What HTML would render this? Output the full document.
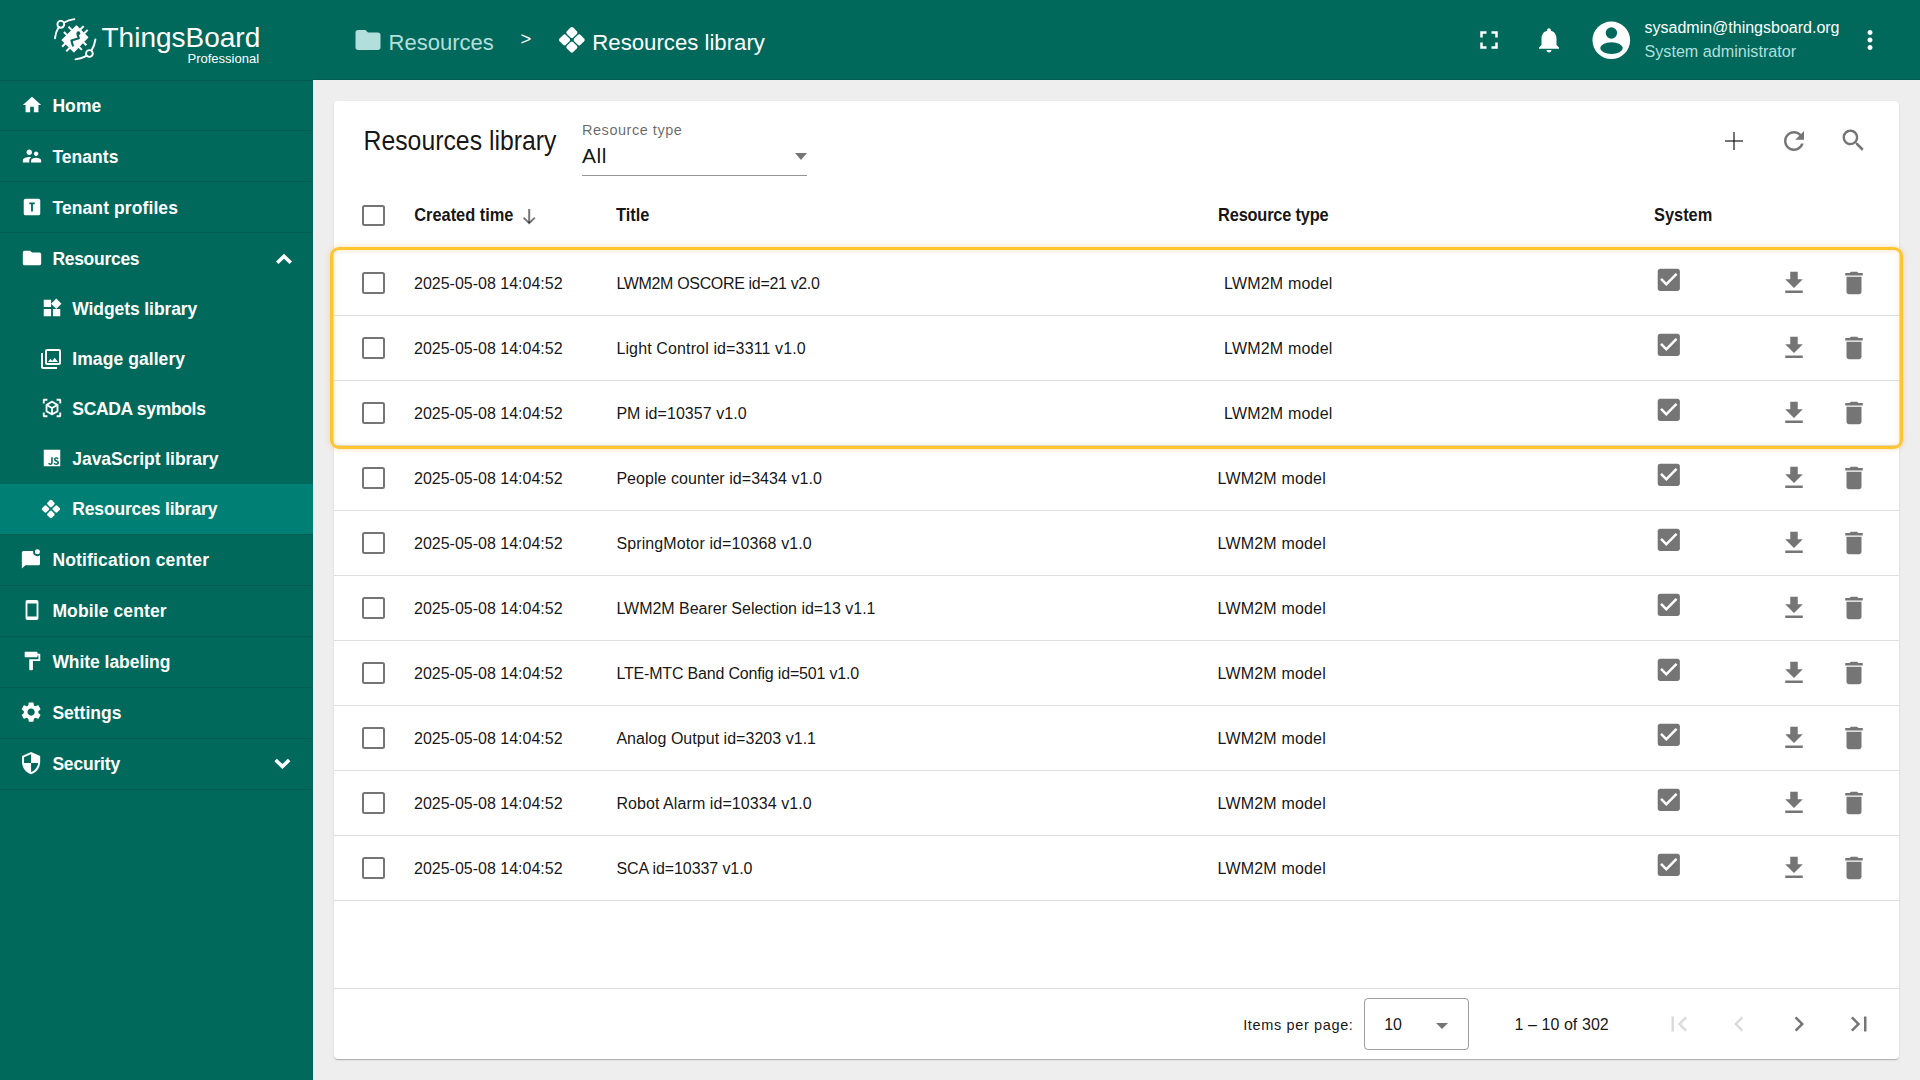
<!DOCTYPE html>
<html><head><meta charset="utf-8">
<style>
*{box-sizing:border-box;margin:0;padding:0}
html,body{width:1920px;height:1080px;overflow:hidden;background:#eeeeee;font-family:"Liberation Sans",sans-serif;color:rgba(0,0,0,0.93)}
.abs{position:absolute}
.t{position:absolute;line-height:1;white-space:nowrap}
svg{display:block}
</style></head><body>
<div class="abs" style="left:0;top:0;width:1920px;height:80px;background:#00695c"></div>
<div class="abs" style="left:313px;top:79px;width:1607px;height:1px;background:rgba(0,0,0,0.12)"></div>
<svg class="abs" style="left:48px;top:12px" width="52" height="52" viewBox="0 0 52 52">
<g fill="none" stroke="#fff" stroke-width="1.9" stroke-linecap="round">
<circle cx="12.8" cy="12.3" r="3.4"/>
<path d="M16.1,10.5 Q20.5,8 26.4,7.1"/>
<path d="M10.6,15.3 Q7.8,19.8 7.0,26.2"/>
<circle cx="41.4" cy="41.5" r="3.4"/>
<path d="M43.5,38.6 Q46.5,33.5 47.4,27.5"/>
<path d="M38.5,43.8 Q33.5,46.5 27.5,47.4"/>
</g>
<polygon points="28.4,13.9 39.8,25.3 25.9,39.8 14.1,28.1" fill="#fff" stroke="#fff" stroke-width="1.2" stroke-linejoin="round"/>
<g stroke="#fff" stroke-width="2">
<path d="M19.3,23.4 L15.9,20.0 M23.9,18.1 L20.5,14.7 M32.3,17.5 L35.7,14.1 M36.3,21.3 L39.7,17.9 M35.0,29.9 L38.4,33.3 M30.5,34.5 L33.9,37.9 M17.5,31.3 L14.1,34.7 M21.7,35.9 L18.3,39.3"/>
</g>
<g stroke="#00695c" stroke-width="2.1" fill="none" stroke-linejoin="round" stroke-linecap="round">
<path d="M29.6,22.6 L30.9,26.3 L23.4,28.4 L24.9,33.6"/>
</g>
<circle cx="30.4" cy="21.2" r="1.9" fill="#00695c"/>
</svg>
<div class="t" style="left:101.50px;top:24.10px;font-size:28px;color:#fff;font-weight:300">ThingsBoard</div>
<div class="t" style="left:187.50px;top:51.50px;font-size:13px;color:#fff;">Professional</div>
<svg class="abs" style="left:352.5px;top:25px;" width="30" height="30" viewBox="0 0 24 24"><path fill="#b2dfdb" d="M10 4H4c-1.1 0-1.99.9-1.99 2L2 18c0 1.1.9 2 2 2h16c1.1 0 2-.9 2-2V8c0-1.1-.9-2-2-2h-8l-2-2z"/></svg>
<div class="t" style="left:388.60px;top:31.68px;font-size:22px;color:#b2dfdb;">Resources</div>
<div class="t" style="left:520.50px;top:29.54px;font-size:18.5px;color:#fff;">&gt;</div>
<svg class="abs" style="left:0;top:0" width="800" height="600"><g fill="#fff"><rect x="567.35" y="28.05" width="9.0" height="9.0" rx="2" transform="rotate(45 571.85 32.55)"/><rect x="574.65" y="35.35" width="9.0" height="9.0" rx="2" transform="rotate(45 579.15 39.85)"/><rect x="567.35" y="42.65" width="9.0" height="9.0" rx="2" transform="rotate(45 571.85 47.15)"/><rect x="560.05" y="35.35" width="9.0" height="9.0" rx="2" transform="rotate(45 564.55 39.85)"/></g></svg>
<div class="t" style="left:592.30px;top:31.51px;font-size:22.2px;color:#fff;">Resources library</div>
<svg class="abs" style="left:1474px;top:25px;" width="30" height="30" viewBox="0 0 24 24"><path fill="#fff" d="M7 14H5v5h5v-2H7v-3zm-2-4h2V7h3V5H5v5zm12 7h-3v2h5v-5h-2v3zM14 5v2h3v3h2V5h-5z"/></svg>
<svg class="abs" style="left:1534px;top:25px;" width="30" height="30" viewBox="0 0 24 24"><path fill="#fff" d="M12 22c1.1 0 2-.9 2-2h-4c0 1.1.89 2 2 2zm6-6v-5c0-3.07-1.64-5.64-4.5-6.32V4c0-.83-.67-1.5-1.5-1.5s-1.5.67-1.5 1.5v.68C7.63 5.36 6 7.92 6 11v5l-2 2v1h16v-1l-2-2z"/></svg>
<svg class="abs" style="left:1586px;top:16px" width="50" height="50" viewBox="0 0 50 50">
<circle cx="25.3" cy="24.3" r="18.8" fill="#fff"/>
<circle cx="25.4" cy="17" r="5.7" fill="#00695c"/>
<ellipse cx="25.5" cy="32.1" rx="11.3" ry="5.9" fill="#00695c"/>
</svg>
<div class="t" style="left:1644.50px;top:20.36px;font-size:16px;color:#fff;">sysadmin@thingsboard.org</div>
<div class="t" style="left:1644.50px;top:43.33px;font-size:16.15px;color:#b2dfdb;">System administrator</div>
<svg class="abs" style="left:1855px;top:25px;" width="30" height="30" viewBox="0 0 24 24"><path fill="#fff" d="M12 8c1.1 0 2-.9 2-2s-.9-2-2-2-2 .9-2 2 .9 2 2 2zm0 2c-1.1 0-2 .9-2 2s.9 2 2 2 2-.9 2-2-.9-2-2-2zm0 6c-1.1 0-2 .9-2 2s.9 2 2 2 2-.9 2-2-.9-2-2-2z"/></svg>
<div class="abs" style="left:0;top:80px;width:313px;height:1000px;background:#00695c"></div>
<div class="abs" style="left:0;top:80px;width:313px;height:1px;background:rgba(0,0,0,0.14)"></div>
<svg class="abs" style="left:20.5px;top:94px;" width="22" height="22" viewBox="0 0 24 24"><path fill="#fff" d="M10 20v-6h4v6h5v-8h3L12 3 2 12h3v8z"/></svg>
<div class="t" style="left:52.40px;top:97.59px;font-size:17.5px;font-weight:bold;color:#fff;letter-spacing:0.08px;">Home</div>
<svg class="abs" style="left:20.5px;top:145px;" width="22" height="22" viewBox="0 0 24 24"><path fill="#fff" d="M16.5 12c1.38 0 2.49-1.12 2.49-2.5S17.88 7 16.5 7C15.12 7 14 8.12 14 9.5s1.12 2.5 2.5 2.5zM9 11c1.66 0 2.99-1.34 2.99-3S10.66 5 9 5C7.34 5 6 6.34 6 8s1.34 3 3 3zm7.5 3c-1.83 0-5.5.92-5.5 2.75V19h11v-2.25c0-1.83-3.67-2.75-5.5-2.75zM9 13c-2.33 0-7 1.17-7 3.5V19h7v-2.25c0-.85.33-2.34 2.37-3.47C10.5 13.1 9.66 13 9 13z"/></svg>
<div class="t" style="left:52.40px;top:148.59px;font-size:17.5px;font-weight:bold;color:#fff;letter-spacing:0.04px;">Tenants</div>
<svg class="abs" style="left:20.5px;top:196px;" width="22" height="22" viewBox="0 0 24 24"><path fill="#fff" d="M9,7V9H11V17H13V9H15V7H9M5,3H19A2,2 0 0,1 21,5V19A2,2 0 0,1 19,21H5A2,2 0 0,1 3,19V5A2,2 0 0,1 5,3Z"/></svg>
<div class="t" style="left:52.40px;top:199.59px;font-size:17.5px;font-weight:bold;color:#fff;letter-spacing:0.1px;">Tenant profiles</div>
<svg class="abs" style="left:20.5px;top:247px;" width="22" height="22" viewBox="0 0 24 24"><path fill="#fff" d="M10 4H4c-1.1 0-1.99.9-1.99 2L2 18c0 1.1.9 2 2 2h16c1.1 0 2-.9 2-2V8c0-1.1-.9-2-2-2h-8l-2-2z"/></svg>
<div class="t" style="left:52.40px;top:250.59px;font-size:17.5px;font-weight:bold;color:#fff;letter-spacing:-0.29px;">Resources</div>
<div class="abs" style="left:0;top:130px;width:313px;height:1px;background:rgba(0,0,0,0.13)"></div>
<div class="abs" style="left:0;top:181px;width:313px;height:1px;background:rgba(0,0,0,0.13)"></div>
<div class="abs" style="left:0;top:232px;width:313px;height:1px;background:rgba(0,0,0,0.13)"></div>
<svg class="abs" style="left:0;top:0" width="313" height="1080"><polygon points="284,253.75 292,261.5 289.5,264.0 284,258.75 278.5,264.0 276,261.5" fill="#fff"/></svg>
<div class="abs" style="left:0;top:484px;width:313px;height:50px;background:#007f74"></div>
<svg class="abs" style="left:40.5px;top:297px;" width="22" height="22" viewBox="0 0 24 24"><path fill="#fff" d="M13 13v8h8v-8h-8zM3 21h8v-8H3v8zM3 3v8h8V3H3zm13.66-1.310L11 7.34 16.66 13l5.66-5.66-5.66-5.65z"/></svg>
<div class="t" style="left:72.30px;top:300.79px;font-size:17.5px;font-weight:bold;color:#fff;letter-spacing:-0.09px;">Widgets library</div>
<svg class="abs" style="left:39px;top:347px;" width="24" height="24" viewBox="0 0 24 24"><path fill="#fff" d="M20 4v12H8V4h12m0-2H8c-1.1 0-2 .9-2 2v12c0 1.1.9 2 2 2h12c1.1 0 2-.9 2-2V4c0-1.1-.9-2-2-2zm-8.5 9.67l1.69 2.26 2.48-3.1L19 15H9zM2 6v14c0 1.1.9 2 2 2h14v-2H4V6H2z"/></svg>
<div class="t" style="left:72.30px;top:350.79px;font-size:17.5px;font-weight:bold;color:#fff;letter-spacing:0.07px;">Image gallery</div>
<svg class="abs" style="left:40.5px;top:397px;" width="22" height="22" viewBox="0 0 24 24"><path fill="#fff" d="M18.25 7.6l-5.5-3.18c-.46-.27-1.04-.27-1.5 0L5.75 7.6c-.46.27-.75.76-.75 1.3v6.35c0 .54.29 1.03.75 1.3l5.5 3.18c.46.27 1.04.27 1.5 0l5.5-3.18c.46-.27.75-.76.75-1.3V8.9c0-.54-.29-1.03-.75-1.3zM7 14.96v-4.62l4 2.32v4.61l-4-2.31zm5-4.03L8 8.61l4-2.31 4 2.31-4 2.32zm1 6.34v-4.61l4-2.32v4.62l-4 2.31zM7 2H3.5C2.67 2 2 2.67 2 3.5V7h2V4h3V2zm10 0h3.5c.83 0 1.5.67 1.5 1.5V7h-2V4h-3V2zM7 22H3.5c-.83 0-1.5-.67-1.5-1.5V17h2v3h3v2zm10 0h3.5c.83 0 1.5-.67 1.5-1.5V17h-2v3h-3v2z"/></svg>
<div class="t" style="left:72.30px;top:400.79px;font-size:17.5px;font-weight:bold;color:#fff;letter-spacing:-0.32px;">SCADA symbols</div>
<svg class="abs" style="left:40.5px;top:447px;" width="22" height="22" viewBox="0 0 24 24"><path fill="#fff" d="M3,3H21V21H3V3M7.73,18.04C8.13,18.89 8.92,19.59 10.27,19.59C11.77,19.59 12.8,18.79 12.8,17.04V11.26H11.1V17C11.1,17.86 10.75,18.08 10.2,18.08C9.62,18.08 9.38,17.68 9.11,17.21L7.73,18.04M13.71,17.86C14.21,18.84 15.22,19.59 16.8,19.59C18.4,19.59 19.6,18.76 19.6,17.23C19.6,15.82 18.79,15.19 17.35,14.57L16.93,14.39C16.2,14.08 15.89,13.87 15.89,13.37C15.89,12.96 16.2,12.64 16.7,12.64C17.18,12.64 17.5,12.85 17.79,13.37L19.1,12.5C18.55,11.54 17.77,11.17 16.7,11.17C15.19,11.17 14.22,12.13 14.22,13.4C14.22,14.78 15.03,15.43 16.25,15.95L16.67,16.13C17.45,16.47 17.91,16.68 17.91,17.26C17.91,17.74 17.46,18.09 16.76,18.09C15.93,18.09 15.45,17.66 15.09,17.06L13.71,17.86Z"/></svg>
<div class="t" style="left:72.30px;top:450.79px;font-size:17.5px;font-weight:bold;color:#fff;letter-spacing:-0.04px;">JavaScript library</div>
<svg class="abs" style="left:0;top:0" width="800" height="600"><g fill="#fff"><rect x="47.85" y="500.55" width="6.1" height="6.1" rx="1.4" transform="rotate(45 50.90 503.60)"/><rect x="53.25" y="505.95" width="6.1" height="6.1" rx="1.4" transform="rotate(45 56.30 509.00)"/><rect x="47.85" y="511.35" width="6.1" height="6.1" rx="1.4" transform="rotate(45 50.90 514.40)"/><rect x="42.45" y="505.95" width="6.1" height="6.1" rx="1.4" transform="rotate(45 45.50 509.00)"/></g></svg>
<div class="t" style="left:72.30px;top:500.79px;font-size:17.5px;font-weight:bold;color:#fff;letter-spacing:-0.17px;">Resources library</div>
<div class="abs" style="left:0;top:534px;width:313px;height:1px;background:rgba(0,0,0,0.13)"></div>
<svg class="abs" style="left:21px;top:549px" width="22" height="22" viewBox="0 0 22 22">
<path fill="#fff" d="M0.85,3.4 Q0.85,1.9 2.35,1.9 H12.07 A4.4,4.4 0 0 0 19,6.22 V14.7 Q19,16.2 17.5,16.2 H4.4 L0.85,19.5 Z"/>
<circle cx="16.4" cy="2.67" r="2.5" fill="#fff"/>
</svg>
<div class="t" style="left:52.40px;top:551.79px;font-size:17.5px;font-weight:bold;color:#fff;letter-spacing:0.17px;">Notification center</div>
<svg class="abs" style="left:20.5px;top:599px;" width="22" height="22" viewBox="0 0 24 24"><path fill="#fff" d="M17,19H7V5H17M17,1H7C5.89,1 5,1.89 5,3V21A2,2 0 0,0 7,23H17A2,2 0 0,0 19,21V3C19,1.89 18.1,1 17,1Z"/></svg>
<div class="t" style="left:52.40px;top:602.79px;font-size:17.5px;font-weight:bold;color:#fff;letter-spacing:0.12px;">Mobile center</div>
<svg class="abs" style="left:20.5px;top:650px;" width="22" height="22" viewBox="0 0 24 24"><path fill="#fff" d="M18 4V3c0-.55-.45-1-1-1H5c-.55 0-1 .45-1 1v4c0 .55.45 1 1 1h12c.55 0 1-.45 1-1V6h1v4H9v11c0 .55.45 1 1 1h2c.55 0 1-.45 1-1v-9h8V4h-3z"/></svg>
<div class="t" style="left:52.40px;top:653.79px;font-size:17.5px;font-weight:bold;color:#fff;letter-spacing:-0.05px;">White labeling</div>
<svg class="abs" style="left:19.4px;top:700px;" width="24.2" height="24.2" viewBox="0 0 24 24"><path fill="#fff" d="M19.14 12.94c.04-.3.06-.61.06-.94 0-.32-.02-.64-.07-.94l2.03-1.58c.18-.14.23-.41.12-.61l-1.92-3.32c-.12-.22-.37-.29-.59-.22l-2.39.96c-.5-.38-1.03-.7-1.62-.94l-.36-2.54c-.04-.24-.24-.41-.48-.41h-3.84c-.24 0-.43.17-.47.41l-.36 2.54c-.59.24-1.13.57-1.62.94l-2.39-.96c-.22-.08-.47 0-.59.22L2.74 8.87c-.12.21-.08.47.12.61l2.03 1.58c-.05.3-.09.63-.09.94s.02.64.07.94l-2.03 1.58c-.18.14-.23.41-.12.61l1.92 3.32c.12.22.37.29.59.22l2.39-.96c.5.38 1.03.7 1.62.94l.36 2.54c.05.24.24.41.48.41h3.84c.24 0 .44-.17.47-.41l.36-2.54c.59-.24 1.13-.56 1.62-.94l2.39.96c.22.08.47 0 .59-.22l1.92-3.32c.12-.22.07-.47-.12-.61l-2.01-1.58zM12 15.6c-1.98 0-3.6-1.62-3.6-3.6s1.62-3.6 3.6-3.6 3.6 1.62 3.6 3.6-1.62 3.6-3.6 3.6z"/></svg>
<div class="t" style="left:52.40px;top:704.79px;font-size:17.5px;font-weight:bold;color:#fff;">Settings</div>
<svg class="abs" style="left:19.4px;top:751px;" width="24.2" height="24.2" viewBox="0 0 24 24"><path fill="#fff" d="M12,12H19C18.47,16.11 15.72,19.78 12,20.92V12H5V6.3L12,3.19M12,1L3,5V11C3,16.55 6.84,21.73 12,23C17.16,21.73 21,16.55 21,11V5L12,1Z"/></svg>
<div class="t" style="left:52.40px;top:755.79px;font-size:17.5px;font-weight:bold;color:#fff;letter-spacing:-0.19px;">Security</div>
<div class="abs" style="left:0;top:585px;width:313px;height:1px;background:rgba(0,0,0,0.13)"></div>
<div class="abs" style="left:0;top:636px;width:313px;height:1px;background:rgba(0,0,0,0.13)"></div>
<div class="abs" style="left:0;top:687px;width:313px;height:1px;background:rgba(0,0,0,0.13)"></div>
<div class="abs" style="left:0;top:738px;width:313px;height:1px;background:rgba(0,0,0,0.13)"></div>
<div class="abs" style="left:0;top:789px;width:313px;height:1px;background:rgba(0,0,0,0.13)"></div>
<svg class="abs" style="left:0;top:0" width="313" height="1080"><polygon points="282.4,769.1 290.4,761.35 287.9,758.85 282.4,764.1 276.9,758.85 274.4,761.35" fill="#fff"/></svg>
<div class="abs" style="left:333.5px;top:101px;width:1565.5px;height:958px;background:#fff;border-radius:4px;box-shadow:0 2px 1px -1px rgba(0,0,0,.14),0 1px 1px 0 rgba(0,0,0,.1),0 1px 3px 0 rgba(0,0,0,.08)"></div>
<div class="t" style="left:363.50px;top:130.01px;font-size:24.8px;transform:scaleY(1.1);transform-origin:0 20.99px;">Resources library</div>
<div class="t" style="left:582.00px;top:122.93px;font-size:14.5px;color:rgba(0,0,0,0.6);letter-spacing:0.53px;">Resource type</div>
<div class="t" style="left:582.00px;top:145.42px;font-size:21px;letter-spacing:0.5px;">All</div>
<div class="abs" style="left:582px;top:175px;width:225px;height:1px;background:rgba(0,0,0,0.42)"></div>
<div class="abs" style="left:795px;top:153px;width:0;height:0;border-left:6.5px solid transparent;border-right:6.5px solid transparent;border-top:7px solid rgba(0,0,0,0.54)"></div>
<div class="abs" style="left:1725px;top:139.7px;width:18.2px;height:2.2px;background:rgba(0,0,0,0.54)"></div>
<div class="abs" style="left:1732.9px;top:132px;width:2.2px;height:17.7px;background:rgba(0,0,0,0.54)"></div>
<svg class="abs" style="left:1779px;top:125.75px;" width="30" height="30" viewBox="0 0 24 24"><path fill="rgba(0,0,0,0.54)" d="M17.65 6.35C16.2 4.9 14.21 4 12 4c-4.42 0-7.99 3.58-7.99 8s3.57 8 7.99 8c3.73 0 6.84-2.55 7.730-6h-2.08c-.82 2.33-3.04 4-5.65 4-3.31 0-6-2.69-6-6s2.69-6 6-6c1.66 0 3.14.69 4.22 1.78L13 11h7V4l-2.35 2.35z"/></svg>
<svg class="abs" style="left:1839.35px;top:125.9px;" width="28.9" height="28.9" viewBox="0 0 24 24"><path fill="rgba(0,0,0,0.54)" d="M15.5 14h-.79l-.28-.27C15.41 12.59 16 11.11 16 9.5 16 5.91 13.09 3 9.5 3S3 5.91 3 9.5 5.91 16 9.5 16c1.61 0 3.09-.59 4.23-1.57l.27.28v.79l5 4.99L20.49 19l-4.99-5zm-6 0C7.01 14 5 11.99 5 9.5S7.01 5 9.5 5 14 7.01 14 9.5 11.99 14 9.5 14z"/></svg>
<div class="abs" style="left:362.2px;top:204.5px;width:22.5px;height:21.5px;border:2px solid rgba(0,0,0,0.54);border-radius:2.5px"></div>
<div class="t" style="left:414.20px;top:206.92px;font-size:16.4px;font-weight:bold;transform:scaleY(1.07);transform-origin:0 13.88px;">Created time</div>
<svg class="abs" style="left:0;top:0" width="1920" height="300"><g stroke="rgba(0,0,0,0.54)" stroke-width="2" fill="none"><path d="M529.2,209 V223"/><path d="M523.6,217.6 L529.2,223.2 L534.8,217.6"/></g></svg>
<div class="t" style="left:616.00px;top:206.92px;font-size:16.4px;font-weight:bold;transform:scaleY(1.07);transform-origin:0 13.88px;">Title</div>
<div class="t" style="left:1218.10px;top:206.92px;font-size:16.4px;font-weight:bold;letter-spacing:-0.2px;transform:scaleY(1.07);transform-origin:0 13.88px;">Resource type</div>
<div class="t" style="left:1654.00px;top:206.92px;font-size:16.4px;font-weight:bold;transform:scaleY(1.07);transform-origin:0 13.88px;">System</div>
<div class="abs" style="left:333.5px;top:315px;width:1565.5px;height:1px;background:#e0e0e0"></div>
<div class="abs" style="left:362.2px;top:272px;width:22.5px;height:21.5px;border:2px solid rgba(0,0,0,0.54);border-radius:2.5px"></div>
<div class="t" style="left:414.00px;top:275.56px;font-size:16px;">2025-05-08 14:04:52</div>
<div class="t" style="left:616.40px;top:275.56px;font-size:16px;letter-spacing:-0.336px;">LWM2M OSCORE id=21 v2.0</div>
<div class="t" style="left:1224.10px;top:275.56px;font-size:16px;letter-spacing:0.185px;">LWM2M model</div>
<svg class="abs" style="left:1654.3px;top:265px;" width="29.6" height="29.6" viewBox="0 0 24 24"><path fill="rgba(0,0,0,0.54)" d="M19 3H5c-1.11 0-2 .9-2 2v14c0 1.1.89 2 2 2h14c1.11 0 2-.9 2-2V5c0-1.1-.89-2-2-2zm-9 14l-5-5 1.41-1.41L10 14.17l7.59-7.59L19 8l-9 9z"/></svg>
<svg class="abs" style="left:1779px;top:268.1px;" width="30" height="30" viewBox="0 0 24 24"><path fill="rgba(0,0,0,0.54)" d="M19 9h-4V3H9v6H5l7 7 7-7zM5 18v2h14v-2H5z"/></svg>
<svg class="abs" style="left:1839px;top:268.15px;" width="30" height="30" viewBox="0 0 24 24"><path fill="rgba(0,0,0,0.54)" d="M6 19c0 1.1.9 2 2 2h8c1.1 0 2-.9 2-2V7H6v12zM19 4h-3.5l-1-1h-5l-1 1H5v2h14V4z"/></svg>
<div class="abs" style="left:333.5px;top:380px;width:1565.5px;height:1px;background:#e0e0e0"></div>
<div class="abs" style="left:362.2px;top:337px;width:22.5px;height:21.5px;border:2px solid rgba(0,0,0,0.54);border-radius:2.5px"></div>
<div class="t" style="left:414.00px;top:340.56px;font-size:16px;">2025-05-08 14:04:52</div>
<div class="t" style="left:616.40px;top:340.56px;font-size:16px;letter-spacing:0.132px;">Light Control id=3311 v1.0</div>
<div class="t" style="left:1224.10px;top:340.56px;font-size:16px;letter-spacing:0.185px;">LWM2M model</div>
<svg class="abs" style="left:1654.3px;top:330px;" width="29.6" height="29.6" viewBox="0 0 24 24"><path fill="rgba(0,0,0,0.54)" d="M19 3H5c-1.11 0-2 .9-2 2v14c0 1.1.89 2 2 2h14c1.11 0 2-.9 2-2V5c0-1.1-.89-2-2-2zm-9 14l-5-5 1.41-1.41L10 14.17l7.59-7.59L19 8l-9 9z"/></svg>
<svg class="abs" style="left:1779px;top:333.1px;" width="30" height="30" viewBox="0 0 24 24"><path fill="rgba(0,0,0,0.54)" d="M19 9h-4V3H9v6H5l7 7 7-7zM5 18v2h14v-2H5z"/></svg>
<svg class="abs" style="left:1839px;top:333.15px;" width="30" height="30" viewBox="0 0 24 24"><path fill="rgba(0,0,0,0.54)" d="M6 19c0 1.1.9 2 2 2h8c1.1 0 2-.9 2-2V7H6v12zM19 4h-3.5l-1-1h-5l-1 1H5v2h14V4z"/></svg>
<div class="abs" style="left:333.5px;top:445px;width:1565.5px;height:1px;background:#e0e0e0"></div>
<div class="abs" style="left:362.2px;top:402px;width:22.5px;height:21.5px;border:2px solid rgba(0,0,0,0.54);border-radius:2.5px"></div>
<div class="t" style="left:414.00px;top:405.56px;font-size:16px;">2025-05-08 14:04:52</div>
<div class="t" style="left:616.40px;top:405.56px;font-size:16px;letter-spacing:0.053px;">PM id=10357 v1.0</div>
<div class="t" style="left:1224.10px;top:405.56px;font-size:16px;letter-spacing:0.185px;">LWM2M model</div>
<svg class="abs" style="left:1654.3px;top:395px;" width="29.6" height="29.6" viewBox="0 0 24 24"><path fill="rgba(0,0,0,0.54)" d="M19 3H5c-1.11 0-2 .9-2 2v14c0 1.1.89 2 2 2h14c1.11 0 2-.9 2-2V5c0-1.1-.89-2-2-2zm-9 14l-5-5 1.41-1.41L10 14.17l7.59-7.59L19 8l-9 9z"/></svg>
<svg class="abs" style="left:1779px;top:398.1px;" width="30" height="30" viewBox="0 0 24 24"><path fill="rgba(0,0,0,0.54)" d="M19 9h-4V3H9v6H5l7 7 7-7zM5 18v2h14v-2H5z"/></svg>
<svg class="abs" style="left:1839px;top:398.15px;" width="30" height="30" viewBox="0 0 24 24"><path fill="rgba(0,0,0,0.54)" d="M6 19c0 1.1.9 2 2 2h8c1.1 0 2-.9 2-2V7H6v12zM19 4h-3.5l-1-1h-5l-1 1H5v2h14V4z"/></svg>
<div class="abs" style="left:333.5px;top:510px;width:1565.5px;height:1px;background:#e0e0e0"></div>
<div class="abs" style="left:362.2px;top:467px;width:22.5px;height:21.5px;border:2px solid rgba(0,0,0,0.54);border-radius:2.5px"></div>
<div class="t" style="left:414.00px;top:470.56px;font-size:16px;">2025-05-08 14:04:52</div>
<div class="t" style="left:616.40px;top:470.56px;font-size:16px;letter-spacing:0.05px;">People counter id=3434 v1.0</div>
<div class="t" style="left:1217.50px;top:470.56px;font-size:16px;letter-spacing:0.185px;">LWM2M model</div>
<svg class="abs" style="left:1654.3px;top:460px;" width="29.6" height="29.6" viewBox="0 0 24 24"><path fill="rgba(0,0,0,0.54)" d="M19 3H5c-1.11 0-2 .9-2 2v14c0 1.1.89 2 2 2h14c1.11 0 2-.9 2-2V5c0-1.1-.89-2-2-2zm-9 14l-5-5 1.41-1.41L10 14.17l7.59-7.59L19 8l-9 9z"/></svg>
<svg class="abs" style="left:1779px;top:463.1px;" width="30" height="30" viewBox="0 0 24 24"><path fill="rgba(0,0,0,0.54)" d="M19 9h-4V3H9v6H5l7 7 7-7zM5 18v2h14v-2H5z"/></svg>
<svg class="abs" style="left:1839px;top:463.15px;" width="30" height="30" viewBox="0 0 24 24"><path fill="rgba(0,0,0,0.54)" d="M6 19c0 1.1.9 2 2 2h8c1.1 0 2-.9 2-2V7H6v12zM19 4h-3.5l-1-1h-5l-1 1H5v2h14V4z"/></svg>
<div class="abs" style="left:333.5px;top:575px;width:1565.5px;height:1px;background:#e0e0e0"></div>
<div class="abs" style="left:362.2px;top:532px;width:22.5px;height:21.5px;border:2px solid rgba(0,0,0,0.54);border-radius:2.5px"></div>
<div class="t" style="left:414.00px;top:535.56px;font-size:16px;">2025-05-08 14:04:52</div>
<div class="t" style="left:616.40px;top:535.56px;font-size:16px;letter-spacing:0.117px;">SpringMotor id=10368 v1.0</div>
<div class="t" style="left:1217.50px;top:535.56px;font-size:16px;letter-spacing:0.185px;">LWM2M model</div>
<svg class="abs" style="left:1654.3px;top:525px;" width="29.6" height="29.6" viewBox="0 0 24 24"><path fill="rgba(0,0,0,0.54)" d="M19 3H5c-1.11 0-2 .9-2 2v14c0 1.1.89 2 2 2h14c1.11 0 2-.9 2-2V5c0-1.1-.89-2-2-2zm-9 14l-5-5 1.41-1.41L10 14.17l7.59-7.59L19 8l-9 9z"/></svg>
<svg class="abs" style="left:1779px;top:528.1px;" width="30" height="30" viewBox="0 0 24 24"><path fill="rgba(0,0,0,0.54)" d="M19 9h-4V3H9v6H5l7 7 7-7zM5 18v2h14v-2H5z"/></svg>
<svg class="abs" style="left:1839px;top:528.15px;" width="30" height="30" viewBox="0 0 24 24"><path fill="rgba(0,0,0,0.54)" d="M6 19c0 1.1.9 2 2 2h8c1.1 0 2-.9 2-2V7H6v12zM19 4h-3.5l-1-1h-5l-1 1H5v2h14V4z"/></svg>
<div class="abs" style="left:333.5px;top:640px;width:1565.5px;height:1px;background:#e0e0e0"></div>
<div class="abs" style="left:362.2px;top:597px;width:22.5px;height:21.5px;border:2px solid rgba(0,0,0,0.54);border-radius:2.5px"></div>
<div class="t" style="left:414.00px;top:600.56px;font-size:16px;">2025-05-08 14:04:52</div>
<div class="t" style="left:616.40px;top:600.56px;font-size:16px;letter-spacing:-0.024px;">LWM2M Bearer Selection id=13 v1.1</div>
<div class="t" style="left:1217.50px;top:600.56px;font-size:16px;letter-spacing:0.185px;">LWM2M model</div>
<svg class="abs" style="left:1654.3px;top:590px;" width="29.6" height="29.6" viewBox="0 0 24 24"><path fill="rgba(0,0,0,0.54)" d="M19 3H5c-1.11 0-2 .9-2 2v14c0 1.1.89 2 2 2h14c1.11 0 2-.9 2-2V5c0-1.1-.89-2-2-2zm-9 14l-5-5 1.41-1.41L10 14.17l7.59-7.59L19 8l-9 9z"/></svg>
<svg class="abs" style="left:1779px;top:593.1px;" width="30" height="30" viewBox="0 0 24 24"><path fill="rgba(0,0,0,0.54)" d="M19 9h-4V3H9v6H5l7 7 7-7zM5 18v2h14v-2H5z"/></svg>
<svg class="abs" style="left:1839px;top:593.15px;" width="30" height="30" viewBox="0 0 24 24"><path fill="rgba(0,0,0,0.54)" d="M6 19c0 1.1.9 2 2 2h8c1.1 0 2-.9 2-2V7H6v12zM19 4h-3.5l-1-1h-5l-1 1H5v2h14V4z"/></svg>
<div class="abs" style="left:333.5px;top:705px;width:1565.5px;height:1px;background:#e0e0e0"></div>
<div class="abs" style="left:362.2px;top:662px;width:22.5px;height:21.5px;border:2px solid rgba(0,0,0,0.54);border-radius:2.5px"></div>
<div class="t" style="left:414.00px;top:665.56px;font-size:16px;">2025-05-08 14:04:52</div>
<div class="t" style="left:616.40px;top:665.56px;font-size:16px;letter-spacing:-0.183px;">LTE-MTC Band Config id=501 v1.0</div>
<div class="t" style="left:1217.50px;top:665.56px;font-size:16px;letter-spacing:0.185px;">LWM2M model</div>
<svg class="abs" style="left:1654.3px;top:655px;" width="29.6" height="29.6" viewBox="0 0 24 24"><path fill="rgba(0,0,0,0.54)" d="M19 3H5c-1.11 0-2 .9-2 2v14c0 1.1.89 2 2 2h14c1.11 0 2-.9 2-2V5c0-1.1-.89-2-2-2zm-9 14l-5-5 1.41-1.41L10 14.17l7.59-7.59L19 8l-9 9z"/></svg>
<svg class="abs" style="left:1779px;top:658.1px;" width="30" height="30" viewBox="0 0 24 24"><path fill="rgba(0,0,0,0.54)" d="M19 9h-4V3H9v6H5l7 7 7-7zM5 18v2h14v-2H5z"/></svg>
<svg class="abs" style="left:1839px;top:658.15px;" width="30" height="30" viewBox="0 0 24 24"><path fill="rgba(0,0,0,0.54)" d="M6 19c0 1.1.9 2 2 2h8c1.1 0 2-.9 2-2V7H6v12zM19 4h-3.5l-1-1h-5l-1 1H5v2h14V4z"/></svg>
<div class="abs" style="left:333.5px;top:770px;width:1565.5px;height:1px;background:#e0e0e0"></div>
<div class="abs" style="left:362.2px;top:727px;width:22.5px;height:21.5px;border:2px solid rgba(0,0,0,0.54);border-radius:2.5px"></div>
<div class="t" style="left:414.00px;top:730.56px;font-size:16px;">2025-05-08 14:04:52</div>
<div class="t" style="left:616.40px;top:730.56px;font-size:16px;letter-spacing:0.032px;">Analog Output id=3203 v1.1</div>
<div class="t" style="left:1217.50px;top:730.56px;font-size:16px;letter-spacing:0.185px;">LWM2M model</div>
<svg class="abs" style="left:1654.3px;top:720px;" width="29.6" height="29.6" viewBox="0 0 24 24"><path fill="rgba(0,0,0,0.54)" d="M19 3H5c-1.11 0-2 .9-2 2v14c0 1.1.89 2 2 2h14c1.11 0 2-.9 2-2V5c0-1.1-.89-2-2-2zm-9 14l-5-5 1.41-1.41L10 14.17l7.59-7.59L19 8l-9 9z"/></svg>
<svg class="abs" style="left:1779px;top:723.1px;" width="30" height="30" viewBox="0 0 24 24"><path fill="rgba(0,0,0,0.54)" d="M19 9h-4V3H9v6H5l7 7 7-7zM5 18v2h14v-2H5z"/></svg>
<svg class="abs" style="left:1839px;top:723.15px;" width="30" height="30" viewBox="0 0 24 24"><path fill="rgba(0,0,0,0.54)" d="M6 19c0 1.1.9 2 2 2h8c1.1 0 2-.9 2-2V7H6v12zM19 4h-3.5l-1-1h-5l-1 1H5v2h14V4z"/></svg>
<div class="abs" style="left:333.5px;top:835px;width:1565.5px;height:1px;background:#e0e0e0"></div>
<div class="abs" style="left:362.2px;top:792px;width:22.5px;height:21.5px;border:2px solid rgba(0,0,0,0.54);border-radius:2.5px"></div>
<div class="t" style="left:414.00px;top:795.56px;font-size:16px;">2025-05-08 14:04:52</div>
<div class="t" style="left:616.40px;top:795.56px;font-size:16px;letter-spacing:0.079px;">Robot Alarm id=10334 v1.0</div>
<div class="t" style="left:1217.50px;top:795.56px;font-size:16px;letter-spacing:0.185px;">LWM2M model</div>
<svg class="abs" style="left:1654.3px;top:785px;" width="29.6" height="29.6" viewBox="0 0 24 24"><path fill="rgba(0,0,0,0.54)" d="M19 3H5c-1.11 0-2 .9-2 2v14c0 1.1.89 2 2 2h14c1.11 0 2-.9 2-2V5c0-1.1-.89-2-2-2zm-9 14l-5-5 1.41-1.41L10 14.17l7.59-7.59L19 8l-9 9z"/></svg>
<svg class="abs" style="left:1779px;top:788.1px;" width="30" height="30" viewBox="0 0 24 24"><path fill="rgba(0,0,0,0.54)" d="M19 9h-4V3H9v6H5l7 7 7-7zM5 18v2h14v-2H5z"/></svg>
<svg class="abs" style="left:1839px;top:788.15px;" width="30" height="30" viewBox="0 0 24 24"><path fill="rgba(0,0,0,0.54)" d="M6 19c0 1.1.9 2 2 2h8c1.1 0 2-.9 2-2V7H6v12zM19 4h-3.5l-1-1h-5l-1 1H5v2h14V4z"/></svg>
<div class="abs" style="left:333.5px;top:900px;width:1565.5px;height:1px;background:#e0e0e0"></div>
<div class="abs" style="left:362.2px;top:857px;width:22.5px;height:21.5px;border:2px solid rgba(0,0,0,0.54);border-radius:2.5px"></div>
<div class="t" style="left:414.00px;top:860.56px;font-size:16px;">2025-05-08 14:04:52</div>
<div class="t" style="left:616.40px;top:860.56px;font-size:16px;letter-spacing:-0.0875px;">SCA id=10337 v1.0</div>
<div class="t" style="left:1217.50px;top:860.56px;font-size:16px;letter-spacing:0.185px;">LWM2M model</div>
<svg class="abs" style="left:1654.3px;top:850px;" width="29.6" height="29.6" viewBox="0 0 24 24"><path fill="rgba(0,0,0,0.54)" d="M19 3H5c-1.11 0-2 .9-2 2v14c0 1.1.89 2 2 2h14c1.11 0 2-.9 2-2V5c0-1.1-.89-2-2-2zm-9 14l-5-5 1.41-1.41L10 14.17l7.59-7.59L19 8l-9 9z"/></svg>
<svg class="abs" style="left:1779px;top:853.1px;" width="30" height="30" viewBox="0 0 24 24"><path fill="rgba(0,0,0,0.54)" d="M19 9h-4V3H9v6H5l7 7 7-7zM5 18v2h14v-2H5z"/></svg>
<svg class="abs" style="left:1839px;top:853.15px;" width="30" height="30" viewBox="0 0 24 24"><path fill="rgba(0,0,0,0.54)" d="M6 19c0 1.1.9 2 2 2h8c1.1 0 2-.9 2-2V7H6v12zM19 4h-3.5l-1-1h-5l-1 1H5v2h14V4z"/></svg>
<div class="abs" style="left:333.5px;top:988px;width:1565.5px;height:1px;background:#e0e0e0"></div>
<div class="t" style="left:1243.20px;top:1017.73px;font-size:14.5px;letter-spacing:0.64px;">Items per page:</div>
<div class="abs" style="left:1364.4px;top:998.3px;width:105px;height:52px;border:1px solid rgba(0,0,0,0.38);border-radius:4px"></div>
<div class="t" style="left:1384.20px;top:1017.06px;font-size:16px;">10</div>
<div class="abs" style="left:1435.6px;top:1022.8px;width:0;height:0;border-left:6.75px solid transparent;border-right:6.75px solid transparent;border-top:6.2px solid rgba(0,0,0,0.54)"></div>
<div class="t" style="left:1514.40px;top:1016.56px;font-size:16px;letter-spacing:0.08px;">1 &ndash; 10 of 302</div>
<svg class="abs" style="left:1663.75px;top:1008.75px;" width="30" height="30" viewBox="0 0 24 24"><path fill="rgba(0,0,0,0.14)" d="M18.41 16.59L13.82 12l4.59-4.59L17 6l-6 6 6 6zM6 6h2v12H6z"/></svg>
<svg class="abs" style="left:1724.4px;top:1008.75px;" width="30" height="30" viewBox="0 0 24 24"><path fill="rgba(0,0,0,0.14)" d="M15.41 7.41L14 6l-6 6 6 6 1.41-1.41L10.83 12z"/></svg>
<svg class="abs" style="left:1784.3px;top:1008.75px;" width="30" height="30" viewBox="0 0 24 24"><path fill="rgba(0,0,0,0.54)" d="M10 6L8.59 7.41 13.17 12l-4.58 4.59L10 18l6-6z"/></svg>
<svg class="abs" style="left:1843.6px;top:1008.75px;" width="30" height="30" viewBox="0 0 24 24"><path fill="rgba(0,0,0,0.54)" d="M5.59 7.41L10.18 12l-4.59 4.59L7 18l6-6-6-6zM16 6h2v12h-2z"/></svg>
<div class="abs" style="left:329.8px;top:247.1px;width:1573.5px;height:201.5px;border:3.4px solid #ffc632;border-radius:9px;box-shadow:0 0 4px 1px rgba(255,165,50,0.3), inset 0 0 4px 1px rgba(255,165,50,0.25)"></div>
</body></html>
